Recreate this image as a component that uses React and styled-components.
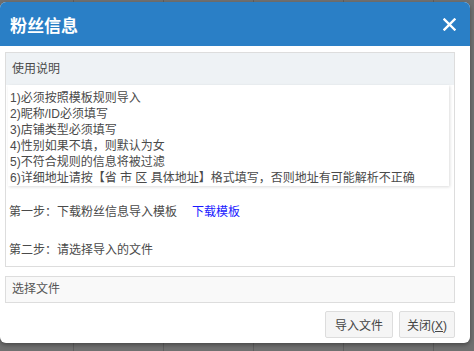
import React from 'react';
import styled, { createGlobalStyle } from 'styled-components';

const Global = createGlobalStyle`
  html, body {
    margin: 0;
    height: 100%;
  }
  body {
    background-color: #707070;
    background-image: repeating-linear-gradient(
      to right,
      transparent 0,
      transparent 73px,
      #5f5f5f 73px,
      #5f5f5f 74px,
      transparent 74px,
      transparent 90px
    );
    font-family: "Liberation Sans", "Noto Sans CJK SC", sans-serif;
    font-size: 12px;
    color: #333;
    overflow: hidden;
  }
`;

const Dialog = styled.div`
  margin-top: 2px;
  width: 470px;
  background: #fff;
  border-radius: 6px;
  box-shadow: 0 2px 4px rgba(0, 0, 0, 0.35);
  overflow: hidden;
  padding-bottom: 5px;
`;

const Header = styled.div`
  height: 44px;
  background: #2a7fc6;
  display: flex;
  align-items: center;
  justify-content: space-between;
  padding: 0 14px 0 10px;
`;

const Title = styled.h3`
  margin: 0;
  color: #fff;
  font-size: 17px;
  font-weight: bold;
  font-family: "Noto Sans CJK SC", sans-serif;
`;

const Close = styled.span`
  display: flex;
  color: #fff;
  cursor: pointer;
`;

const Body = styled.div`
  padding: 6px 15px 0 5px;
  display: flex;
  flex-direction: column;
`;

const Panel = styled.div`
  border: 1px solid #ddd;
  display: flex;
  flex-direction: column;
`;

const PanelHead = styled.div`
  height: 32px;
  line-height: 32px;
  background: #eef2f5;
  padding-left: 6px;
  color: #4a4a4a;
`;

const Rules = styled.div`
  margin: 0 5px 0 2px;
  padding: 5px 2px 0;
  background: #fff;
  box-shadow: 1px 1px 3px rgba(0, 0, 0, 0.14);
  line-height: 16px;
  color: #4a4a4a;
`;

const Step = styled.div`
  padding-left: 3px;
  line-height: 16px;
  margin-top: ${p => p.$top}px;
  margin-bottom: ${p => p.$bottom || 0}px;
  color: #4a4a4a;
  display: flex;
  gap: 15px;
`;

const Link = styled.a`
  color: #1a1aff;
  text-decoration: none;
`;

const FileBox = styled.div`
  margin-top: 9px;
  height: 25px;
  line-height: 25px;
  border: 1px solid #ddd;
  background: #f9f9f9;
  padding-left: 6px;
  color: #555;
`;

const Footer = styled.div`
  margin-top: 8px;
  display: flex;
  justify-content: flex-end;
  gap: 6px;
`;

const Button = styled.button`
  height: 27px;
  padding: 0 ${p => p.$pad}px;
  border: 1px solid #ddd;
  border-radius: 2px;
  background: #f5f5f5;
  color: #444;
  font-family: "Liberation Sans", "Noto Sans CJK SC", sans-serif;
  font-size: 12px;
  cursor: pointer;
`;

const rules = [
  '1)必须按照模板规则导入',
  '2)昵称/ID必须填写',
  '3)店铺类型必须填写',
  '4)性别如果不填，则默认为女',
  '5)不符合规则的信息将被过滤',
  '6)详细地址请按【省 市 区 具体地址】格式填写，否则地址有可能解析不正确',
];

export default function App() {
  return (
    <>
      <Global />
      <Dialog>
        <Header>
          <Title>粉丝信息</Title>
          <Close>
            <svg width="13" height="13" viewBox="0 0 13 13">
              <path d="M1.5 1.5 L11.5 11.5 M11.5 1.5 L1.5 11.5" stroke="#fff" strokeWidth="2.4" strokeLinecap="square" />
            </svg>
          </Close>
        </Header>
        <Body>
          <Panel>
            <PanelHead>使用说明</PanelHead>
            <Rules>
              {rules.map(r => (
                <div key={r}>{r}</div>
              ))}
            </Rules>
            <Step $top={18}>
              <span>第一步：下载粉丝信息导入模板</span>
              <Link href="#">下载模板</Link>
            </Step>
            <Step $top={22} $bottom={8}>
              <span>第二步：请选择导入的文件</span>
            </Step>
          </Panel>
          <FileBox>选择文件</FileBox>
          <Footer>
            <Button $pad={9}>导入文件</Button>
            <Button $pad={7}>
              关闭(<u>X</u>)
            </Button>
          </Footer>
        </Body>
      </Dialog>
    </>
  );
}
